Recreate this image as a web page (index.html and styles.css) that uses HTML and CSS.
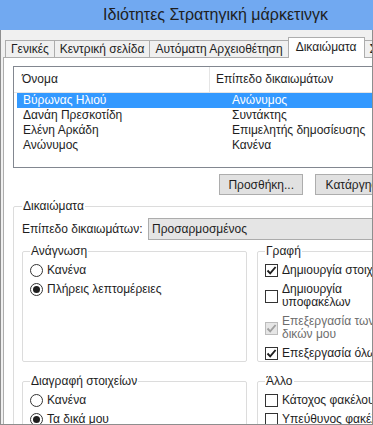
FILE: index.html
```html
<!DOCTYPE html>
<html lang="el">
<head>
  <meta charset="UTF-8">
  <title>Ιδιότητες Στρατηγική μάρκετινγκ</title>
  <link rel="stylesheet" href="styles.css">
</head>
<body>
  <div class="titlebar">Ιδιότητες Στρατηγική μάρκετινγκ</div>
  <div class="window">
    <div class="tabs">
      <div class="tab">Γενικές</div>
      <div class="tab">Κεντρική σελίδα</div>
      <div class="tab">Αυτόματη Αρχειοθέτηση</div>
      <div class="tab active">Δικαιώματα</div>
      <div class="tab">Σύνθετες</div>
    </div>
    <div class="panel">
      <div class="list">
        <div class="list-head">
          <div class="head-name">Όνομα</div>
          <div class="head-level">Επίπεδο δικαιωμάτων</div>
        </div>
        <div class="list-row selected"><span>Βύρωνας Ηλιού</span><span>Ανώνυμος</span></div>
        <div class="list-row"><span>Δανάη Πρεσκοτίδη</span><span>Συντάκτης</span></div>
        <div class="list-row"><span>Ελένη Αρκάδη</span><span>Επιμελητής δημοσίευσης</span></div>
        <div class="list-row"><span>Ανώνυμος</span><span>Κανένα</span></div>
      </div>
      <div class="buttons">
        <button class="btn">Προσθήκη...</button>
        <button class="btn">Κατάργηση</button>
      </div>
      <fieldset class="group">
        <legend>Δικαιώματα</legend>
        <div class="level-row">
          <label class="level-label">Επίπεδο δικαιωμάτων:</label>
          <div class="select">Προσαρμοσμένος</div>
        </div>
        <div class="groups">
          <fieldset class="sub">
            <legend>Ανάγνωση</legend>
            <div class="opt"><span class="radio"></span>Κανένα</div>
            <div class="opt"><span class="radio on"></span>Πλήρεις λεπτομέρειες</div>
          </fieldset>
          <fieldset class="sub">
            <legend>Γραφή</legend>
            <div class="opt"><span class="check on"><svg viewBox="0 0 11 11"><path d="M1.5 5.5 L4.2 8.3 L9.6 2"/></svg></span>Δημιουργία στοιχείων</div>
            <div class="opt"><span class="check"></span>Δημιουργία<br>υποφακέλων</div>
            <div class="opt disabled"><span class="check on"><svg viewBox="0 0 11 11"><path d="M1.5 5.5 L4.2 8.3 L9.6 2"/></svg></span>Επεξεργασία των<br>δικών μου</div>
            <div class="opt"><span class="check on"><svg viewBox="0 0 11 11"><path d="M1.5 5.5 L4.2 8.3 L9.6 2"/></svg></span>Επεξεργασία όλων</div>
          </fieldset>
          <fieldset class="sub">
            <legend>Διαγραφή στοιχείων</legend>
            <div class="opt"><span class="radio"></span>Κανένα</div>
            <div class="opt"><span class="radio on"></span>Τα δικά μου</div>
          </fieldset>
          <fieldset class="sub">
            <legend>Άλλο</legend>
            <div class="opt"><span class="check"></span>Κάτοχος φακέλου</div>
            <div class="opt"><span class="check"></span>Υπεύθυνος φακέλου</div>
          </fieldset>
        </div>
      </fieldset>
    </div>
  </div>
</body>
</html>
```
FILE: styles.css
```css
* {
  margin: 0;
  padding: 0;
  box-sizing: border-box;
}
body {
  width: 373px;
  height: 425px;
  overflow: hidden;
  background: #f0f0f0;
  color: #1e1e1e;
  font-family: "Liberation Sans", "Noto Sans", sans-serif;
  font-size: 12px;
}
.titlebar {
  height: 30px;
  padding-left: 58px;
  background: #71a9f1;
  font-size: 16px;
  line-height: 30px;
  text-align: center;
  white-space: nowrap;
}
.window {
  height: 395px;
  padding: 7px 0 0 2px;
  border: 1px solid #8e8e8e;
  border-top: 0;
  overflow: hidden;
}
/* tabs */
.tabs {
  display: flex;
  align-items: flex-end;
  padding-left: 2px;
  position: relative;
  z-index: 1;
}
.tab {
  height: 17px;
  padding: 0 5px;
  margin-right: -1px;
  border: 1px solid #adadad;
  border-bottom: 0;
  background: #f0f0f0;
  line-height: 16px;
  white-space: nowrap;
}
.tab.active {
  height: 21px;
  padding: 1px 7px 0;
  margin-bottom: -1px;
  background: #ffffff;
  line-height: 16px;
}
.panel {
  width: 420px;
  height: 370px;
  padding: 8px 0 0 9px;
  border: 1px solid #adadad;
  background: #ffffff;
}
/* list */
.list {
  width: 383px;
  height: 102px;
  border: 1px solid #828790;
}
.list-head {
  display: flex;
  height: 26px;
  border-bottom: 1px solid #e5e5e5;
  line-height: 25px;
}
.head-name {
  width: 196px;
  padding-left: 8px;
  border-right: 1px solid #e5e5e5;
}
.head-level {
  padding-left: 6px;
}
.list-row {
  display: grid;
  grid-template-columns: 209px 1fr;
  height: 15px;
  margin: 0 3px;
  padding-left: 6px;
  line-height: 15px;
  white-space: nowrap;
}
.list-row.selected {
  background: #3399ff;
  color: #ffffff;
}
/* buttons */
.buttons {
  display: flex;
  justify-content: flex-end;
  gap: 12px;
  width: 383px;
  margin-top: 6px;
}
.btn {
  min-width: 81px;
  height: 21px;
  padding: 0 8px;
  border: 1px solid #adadad;
  background: #e1e1e1;
  color: #1e1e1e;
  font: inherit;
}
/* groups */
fieldset {
  border: 1px solid #dcdcdc;
  border-radius: 2px;
}
legend {
  padding: 0 1px;
  line-height: 16px;
}
.group {
  width: 383px;
  margin-top: 3px;
  padding: 4px 8px 8px;
}
.level-row {
  display: flex;
  align-items: center;
  height: 22px;
}
.level-label {
  width: 126px;
  white-space: nowrap;
}
.select {
  flex: 1;
  height: 22px;
  padding-left: 3px;
  border: 1px solid #acacac;
  background: #e5e5e5;
  line-height: 20px;
}
.groups {
  display: grid;
  grid-template-columns: 225px 1fr;
  column-gap: 10px;
  row-gap: 11px;
  margin-top: 3px;
}
.sub {
  display: flex;
  flex-direction: column;
  gap: 6px;
  padding: 5px 7px 1px;
}
.opt {
  display: flex;
  align-items: center;
  gap: 4px;
  line-height: 13px;
  white-space: nowrap;
}
.opt.disabled {
  color: #6d6d6d;
}
.radio {
  flex: none;
  display: flex;
  align-items: center;
  justify-content: center;
  width: 13px;
  height: 13px;
  border: 1px solid #333333;
  border-radius: 50%;
  background: #ffffff;
}
.radio.on::after {
  content: "";
  width: 7px;
  height: 7px;
  border-radius: 50%;
  background: #1e1e1e;
}
.check {
  flex: none;
  display: flex;
  width: 13px;
  height: 13px;
  border: 1px solid #333333;
  background: #ffffff;
}
.check svg {
  width: 11px;
  height: 11px;
  fill: none;
  stroke: #1e1e1e;
  stroke-width: 1.9;
}
.disabled .check {
  border-color: #bcbcbc;
  background: #e6e6e6;
}
.disabled .check svg {
  stroke: #a0a0a0;
}
```
